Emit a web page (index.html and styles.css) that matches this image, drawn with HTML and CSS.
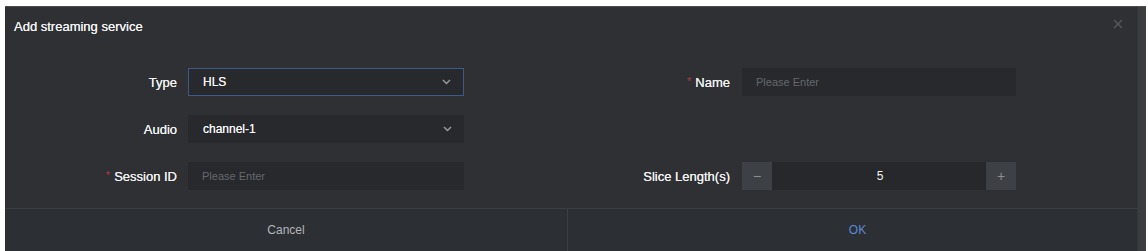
FILE: index.html
```html
<!DOCTYPE html>
<html>
<head>
<meta charset="utf-8">
<link rel="stylesheet" href="styles.css">
</head>
<body>
<div class="dialog">
  <div class="main">
    <div class="header">
      <span class="title">Add streaming service</span>
      <span class="close">
        <svg width="10" height="10" viewBox="0 0 10 10"><path d="M1 1L9 9M9 1L1 9" stroke="#55585c" stroke-width="1.4" fill="none"/></svg>
      </span>
    </div>
    <div class="form">
      <label class="lbl">Type</label>
      <div class="ctrl select focus"><span class="val">HLS</span><svg class="chev" width="9" height="6" viewBox="0 0 9 6"><path d="M1 1L4.5 4.5L8 1" stroke="#9a9ca0" stroke-width="1.4" fill="none"/></svg></div>
      <label class="lbl lbl2"><span class="req">*</span><span>Name</span></label>
      <div class="ctrl input"><span class="ph">Please Enter</span></div>

      <label class="lbl">Audio</label>
      <div class="ctrl select"><span class="val">channel-1</span><svg class="chev" width="9" height="6" viewBox="0 0 9 6"><path d="M1 1L4.5 4.5L8 1" stroke="#9a9ca0" stroke-width="1.4" fill="none"/></svg></div>
      <div class="empty"></div>
      <div class="empty"></div>

      <label class="lbl"><span class="req">*</span><span>Session ID</span></label>
      <div class="ctrl input"><span class="ph">Please Enter</span></div>
      <label class="lbl lbl2">Slice Length(s)</label>
      <div class="num">
        <span class="step">&minus;</span>
        <span class="numval">5</span>
        <span class="step">+</span>
      </div>
    </div>
    <div class="footer">
      <div class="btn cancel">Cancel</div>
      <div class="btn ok">OK</div>
    </div>
  </div>
  <div class="scroll"></div>
</div>
</body>
</html>
```
FILE: styles.css
```css
html, body {
  margin: 0;
  padding: 0;
  background: #ffffff;
  height: 251px;
  overflow: hidden;
}
body {
  font-family: "Liberation Sans", Arial, sans-serif;
  padding: 6px 2px 0 5px;
  box-sizing: border-box;
}
.dialog {
  display: flex;
  background: #2e3034;
  height: 245px;
  overflow: hidden;
  border-top: 1px solid #4a4c50;
  box-sizing: border-box;
}
.main {
  flex: 1;
  display: flex;
  flex-direction: column;
}
.scroll {
  width: 8px;
  background: #3a3c40;
  border-left: 1px solid #333539;
}
.header {
  height: 39px;
  flex: none;
  display: flex;
  align-items: center;
  justify-content: space-between;
  padding: 0 14px 0 9px;
}
.title {
  color: #f2f2f2;
  font-size: 13px;
  text-shadow: 0 0 0.4px #ffffff;
}
.close {
  display: flex;
  margin-top: -6px;
}
.form {
  display: grid;
  grid-template-columns: 183px 276px 278px 274px;
  grid-auto-rows: 28px;
  row-gap: 19px;
  padding: 22px 0 18px 0;
  flex: none;
}
.lbl {
  color: #f0f0f0;
  font-size: 13px;
  text-shadow: 0 0 0.5px #ffffff;
  padding-right: 11px;
  display: flex;
  align-items: center;
  justify-content: flex-end;
}
.lbl2 {
  padding-right: 12px;
}
.req {
  color: #b23a44;
  font-size: 11px;
  margin-right: 4px;
  margin-top: -3px;
  text-shadow: none;
}
.ctrl {
  background: #27292c;
  display: flex;
  align-items: center;
  justify-content: space-between;
  padding: 0 12px 0 15px;
  box-sizing: border-box;
  font-size: 12px;
}
.input {
  padding-left: 14px;
}
.focus {
  border: 1px solid #3e5a88;
  padding-left: 14px;
  background: #28292d;
}
.val {
  color: #f2f2f2;
  text-shadow: 0 0 0.4px #ffffff;
}
.ph {
  color: #66686c;
  font-size: 11px;
}
.chev {
  display: block;
}
.num {
  display: flex;
  height: 28px;
}
.step {
  width: 30px;
  background: #3d4045;
  color: #8c8e92;
  font-size: 14px;
  display: flex;
  align-items: center;
  justify-content: center;
}
.numval {
  flex: 1;
  background: #26282b;
  color: #f2f2f2;
  font-size: 12px;
  display: flex;
  align-items: center;
  justify-content: center;
  padding-left: 2px;
}
.footer {
  display: flex;
  border-top: 1px solid #3b3e42;
  flex: 1;
  background: #2c2f33;
}
.btn {
  display: flex;
  align-items: center;
  justify-content: center;
  font-size: 12px;
  padding-bottom: 1px;
}
.cancel {
  width: 562px;
  flex: none;
  color: #b4b6b9;
  border-right: 1px solid #3b3e42;
}
.ok {
  flex: 1;
  color: #5b8ad6;
  padding-left: 10px;
}
```
